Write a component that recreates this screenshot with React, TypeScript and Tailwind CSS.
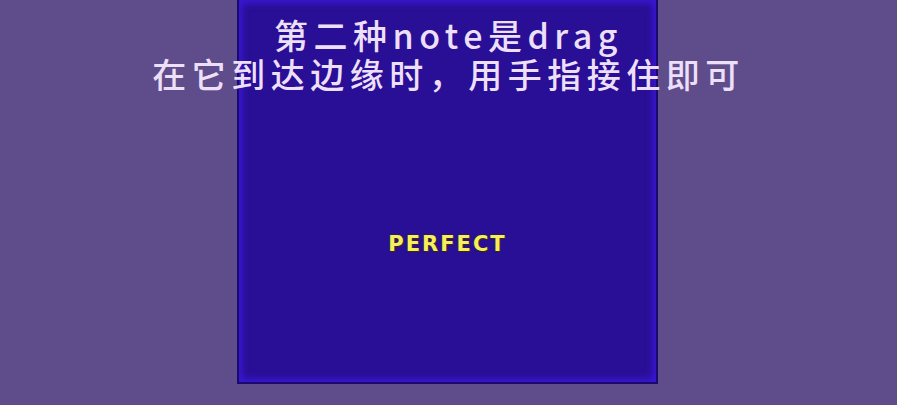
import React from 'react';

const App: React.FC = () => {
    return (
        <div className="relative w-[897px] h-[405px] overflow-hidden bg-[#5f4d8b]">
            {/* Play field */}
            <div className="ml-[237px] w-[421px] h-[384px] border-2 border-t-0 border-[#1b0a6e] bg-[#290f95] shadow-[inset_0_0_7px_3px_#3a18d8] flex flex-col items-center">
                <div className="mt-[229px] text-[21px] font-bold tracking-[2px] text-[#f6ef5c] [font-family:'DejaVu_Sans',sans-serif] [text-shadow:0_0_2px_#3a2a10,1px_1px_0_#3a2a10]">
                    PERFECT
                </div>
            </div>

            {/* Subtitle */}
            <div className="absolute left-0 right-0 top-[15px] flex flex-col items-center text-[#ecdff7] text-[34px] leading-[39px] font-medium tracking-[5.5px] [font-family:'Noto_Sans_CJK_SC',sans-serif]">
                <p>第二种note是drag</p>
                <p>在它到达边缘时，用手指接住即可</p>
            </div>
        </div>
    );
};

export default App;
